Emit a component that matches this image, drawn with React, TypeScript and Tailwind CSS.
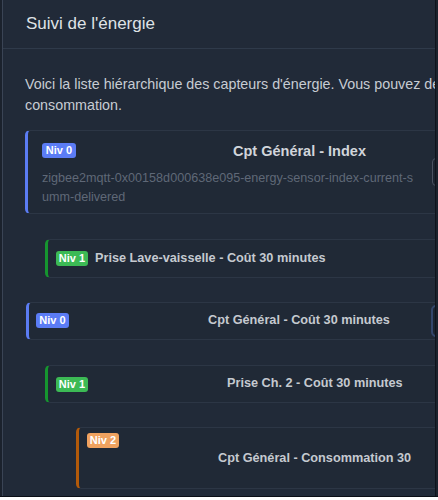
import React from "react";

function Badge({ label, cls }: { label: string; cls: string }) {
  return (
    <span
      className={
        "inline-flex h-[15px] shrink-0 items-center justify-center rounded-[3px] text-[11px] font-bold leading-none text-white " +
        cls
      }
    >
      {label}
    </span>
  );
}

export default function App() {
  return (
    <div
      className="relative h-[500px] w-[438px] overflow-hidden bg-white"
      style={{ fontFamily: '"Liberation Sans", Arial, sans-serif' }}
    >
      <div className="flex h-[497px] border-b border-[#0b0f16] bg-[#1b222d]">
        <div className="w-[2px] shrink-0" />
        <div className="h-full w-[434px] shrink-0 overflow-hidden border-l border-r border-l-[#3a4455] border-r-[#0f141c] bg-[#212a38]">
          <div className="w-[640px]">
            {/* header */}
            <div className="flex h-[49px] items-center border-b border-[#2f3a4a] pl-[23px] text-[17px] text-[#dfe2e6]">
              Suivi de l'énergie
            </div>
            {/* body */}
            <div className="pl-[22px] pt-[25px]">
              <p className="whitespace-nowrap text-[14.3px] leading-[21px] text-[#c7ccd3]">
                Voici la liste hiérarchique des capteurs d'énergie. Vous pouvez définir
                <br />
                consommation.
              </p>

              {/* item 1 */}
              <div className="mt-[14px] flex h-[84px] w-[600px] items-center rounded-l-[5px] border border-[#2c3645] border-l-[3px] border-l-[#5b7cf3] bg-[#202936]">
                <div className="w-[390px] shrink-0 self-start pl-[14px] pt-[9px]">
                  <div className="flex h-[20px] items-center">
                    <Badge label="Niv 0" cls="w-[34px] bg-[#5b7cf5]" />
                    <span className="ml-[157px] whitespace-nowrap pt-[3px] text-[14.5px] font-bold text-[#d1d5db]">
                      Cpt Général - Index
                    </span>
                  </div>
                  <div className="mt-[9px] w-[376px] break-all text-[12.6px] leading-[19px] text-[#5f6877]">
                    zigbee2mqtt-0x00158d000638e095-energy-sensor-index-current-summ-delivered
                  </div>
                </div>
                <div className="ml-[14px] h-[28px] w-[60px] rounded-[4px] border border-[#4a5261] bg-[#1c2430]" />
              </div>

              {/* item 2 */}
              <div className="ml-[20px] mt-[25px] flex h-[39px] w-[600px] items-center rounded-l-[5px] border border-[#2c3645] border-l-[3px] border-l-[#16952f] bg-[#202936] pl-[8px]">
                <Badge label="Niv 1" cls="w-[32px] bg-[#3cba55]" />
                <span className="ml-[7px] whitespace-nowrap text-[12.7px] font-bold text-[#c5c9d0]">
                  Prise Lave-vaisselle - Coût 30 minutes
                </span>
              </div>

              {/* item 3 */}
              <div className="ml-[1px] mt-[24px] flex h-[38px] w-[600px] items-center rounded-l-[5px] border border-[#2c3645] border-l-[3px] border-l-[#5b7cf3] bg-[#202936]">
                <div className="flex w-[402px] shrink-0 items-center pl-[7px]">
                  <Badge label="Niv 0" cls="w-[33px] bg-[#5b7cf5]" />
                  <span className="ml-[139px] whitespace-nowrap text-[12.7px] font-bold text-[#c5c9d0]">
                    Cpt Général - Coût 30 minutes
                  </span>
                </div>
                <div className="h-[32px] w-[60px] rounded-[5px] border-2 border-[#33466b] bg-[#1c2430]" />
              </div>

              {/* item 4 */}
              <div className="ml-[20px] mt-[25px] flex h-[38px] w-[600px] items-center rounded-l-[5px] border border-[#2c3645] border-l-[3px] border-l-[#16952f] bg-[#202936] pl-[8px]">
                <Badge label="Niv 1" cls="w-[32px] bg-[#3cba55]" />
                <span className="ml-[139px] whitespace-nowrap text-[12.7px] font-bold text-[#c5c9d0]">
                  Prise Ch. 2 - Coût 30 minutes
                </span>
              </div>

              {/* item 5 */}
              <div className="ml-[51px] mt-[24px] flex h-[62px] w-[560px] flex-col rounded-l-[5px] border border-[#2c3645] border-l-[3px] border-l-[#b35a0a] bg-[#202936] pl-[8px] pt-[5px]">
                <Badge label="Niv 2" cls="w-[32px] bg-[#f0a25f]" />
                <span className="ml-[131px] mt-[1px] whitespace-nowrap text-[12.7px] font-bold leading-[18px] text-[#c5c9d0]">
                  Cpt Général - Consommation 30
                </span>
              </div>
            </div>
          </div>
        </div>
      </div>
    </div>
  );
}
